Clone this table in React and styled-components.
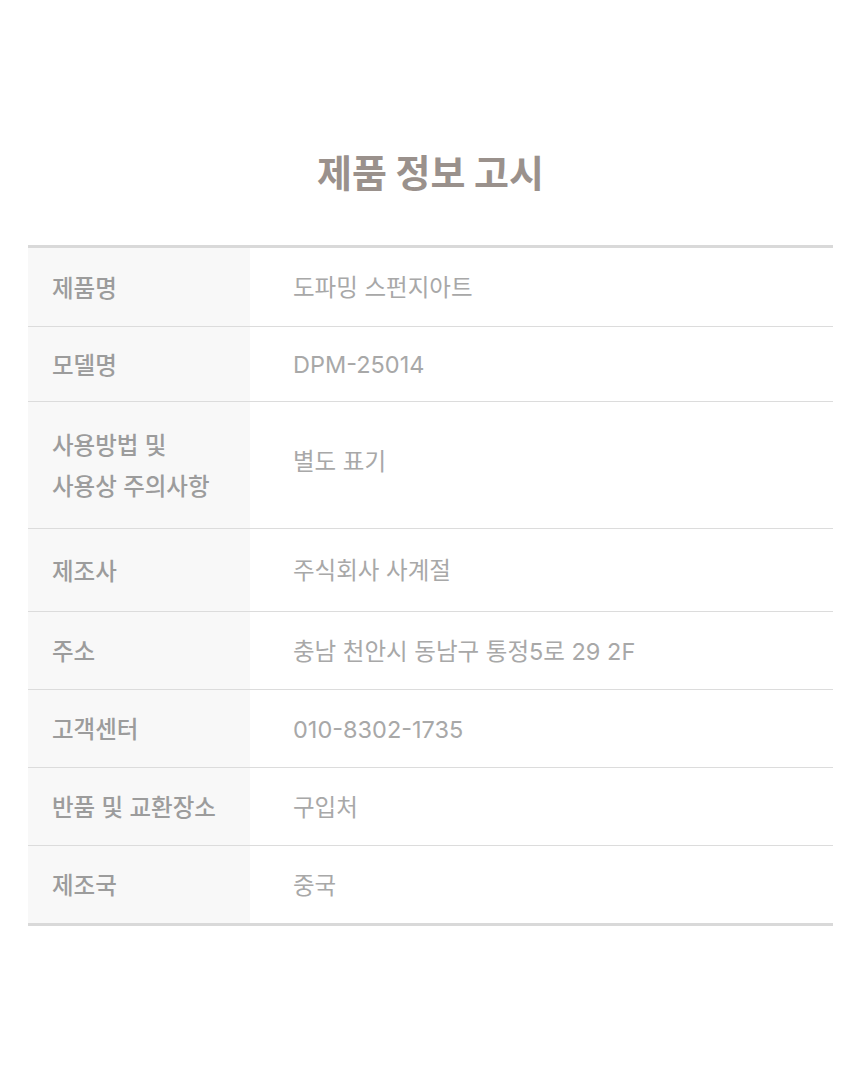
import React from "react";
import styled, { createGlobalStyle } from "styled-components";

const GlobalStyle = createGlobalStyle`
  html, body {
    margin: 0;
    padding: 0;
    background: #ffffff;
  }
  body {
    font-family: "Noto Sans CJK KR", "Noto Sans", sans-serif;
  }
`;

const Page = styled.div`
  width: 860px;
  box-sizing: border-box;
  padding: 146px 27px 0 28px;
`;

const Title = styled.h2`
  margin: 0 0 50px;
  text-align: center;
  font-size: 38px;
  line-height: 49px;
  font-weight: 700;
  color: #9a918c;
  letter-spacing: 0;
`;

const Table = styled.div`
  border-top: 3px solid #d9d9d9;
  border-bottom: 3px solid #d9d9d9;
`;

const Row = styled.div`
  display: grid;
  grid-template-columns: 222px 1fr;
  min-height: ${(p) => p.$h}px;
  border-bottom: 1px solid #dcdcdc;
  &:last-child {
    border-bottom: none;
  }
`;

const Label = styled.div`
  display: flex;
  align-items: center;
  box-sizing: border-box;
  padding-left: 24px;
  padding-top: 2px;
  background: #f8f8f8;
  font-family: "Inter", "Noto Sans CJK KR", sans-serif;
  font-size: 23.5px;
  line-height: 41px;
  font-weight: 500;
  color: #9c9c9c;
`;

const Value = styled.div`
  display: flex;
  align-items: center;
  box-sizing: border-box;
  padding-left: 43px;
  padding-top: 2px;
  padding-bottom: ${(p) => (p.$tall ? 8 : 0)}px;
  font-family: "Inter", "Noto Sans CJK KR", sans-serif;
  font-size: 23.5px;
  line-height: 30px;
  font-weight: 400;
  color: #a8a8a8;
`;

const rows = [
  { label: "제품명", value: "도파밍 스펀지아트", h: 78 },
  { label: "모델명", value: "DPM-25014", h: 74 },
  { label: "사용방법 및\n사용상 주의사항", value: "별도 표기", h: 126 },
  { label: "제조사", value: "주식회사 사계절", h: 82 },
  { label: "주소", value: "충남 천안시 동남구 통정5로 29 2F", h: 77 },
  { label: "고객센터", value: "010-8302-1735", h: 77 },
  { label: "반품 및 교환장소", value: "구입처", h: 77 },
  { label: "제조국", value: "중국", h: 77 },
];

export default function App() {
  return (
    <>
      <GlobalStyle />
      <Page>
        <Title>제품 정보 고시</Title>
        <Table>
          {rows.map((r) => {
            const tall = r.h > 100;
            return (
              <Row key={r.label} $h={r.h}>
                <Label>
                  <span>
                    {r.label.split("\n").map((line, i) => (
                      <React.Fragment key={i}>
                        {i > 0 && <br />}
                        {line}
                      </React.Fragment>
                    ))}
                  </span>
                </Label>
                <Value $tall={tall}>{r.value}</Value>
              </Row>
            );
          })}
        </Table>
      </Page>
    </>
  );
}
